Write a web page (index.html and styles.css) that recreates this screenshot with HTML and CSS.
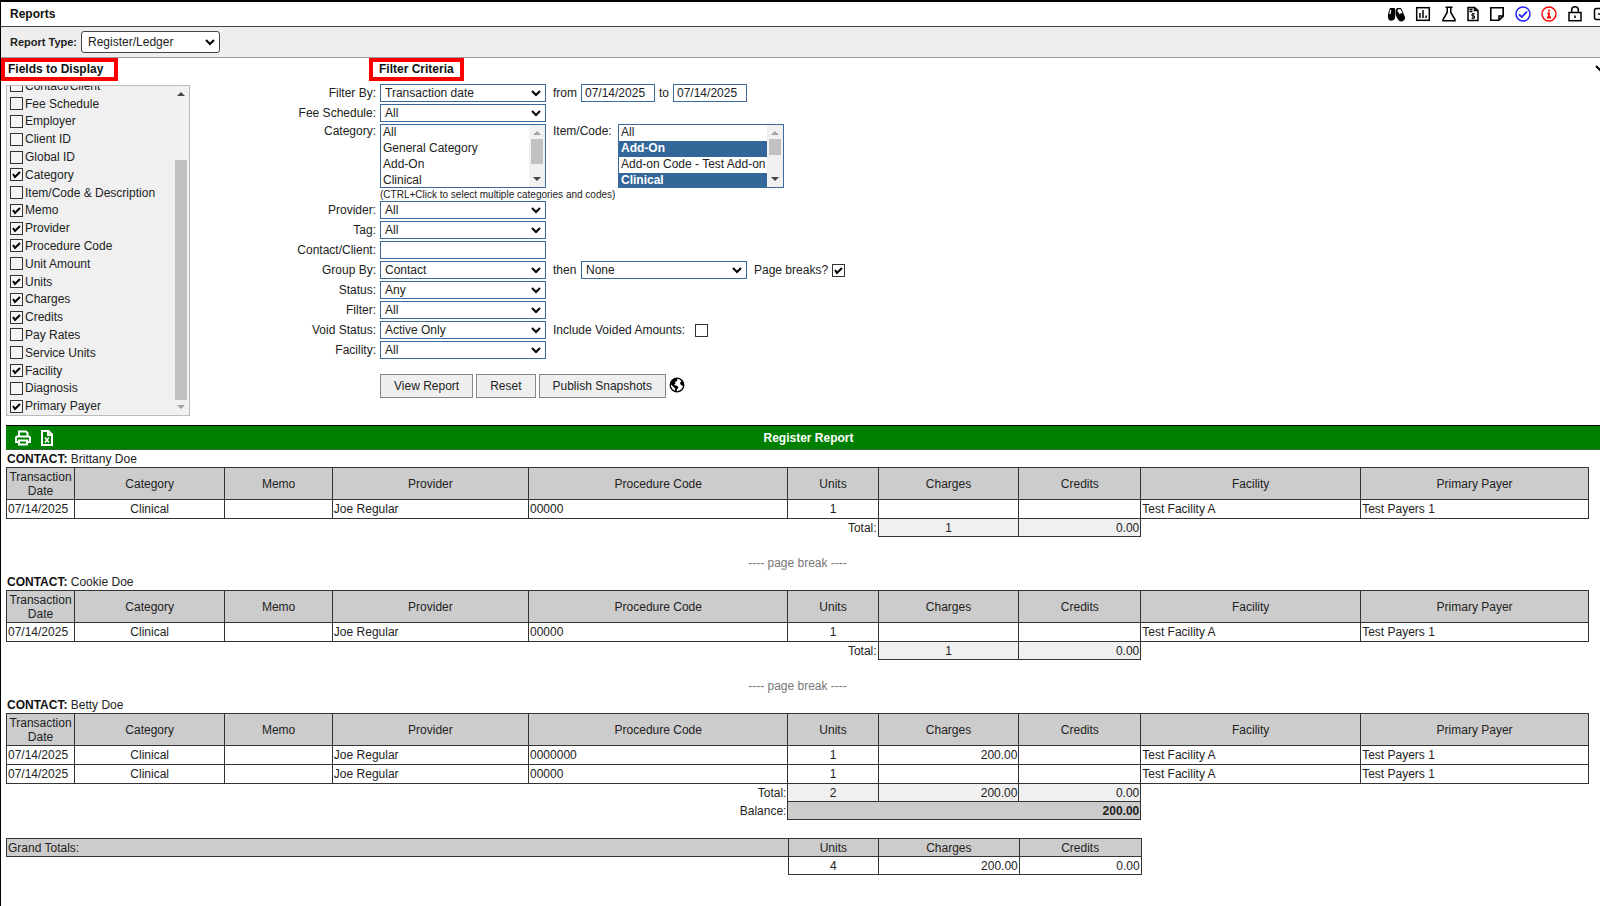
FILE: index.html
```html
<!DOCTYPE html>
<html lang="en">
<head>
  <meta charset="UTF-8" />
  <meta name="viewport" content="width=device-width, initial-scale=1.0"/>
  <title>Reports</title>
  <link rel="stylesheet" href="styles.css">
</head>
<body>
  <header class="topbar">
    <h1>Reports</h1>
    <nav class="tools">
      <button type="button" class="wide" aria-label="Search"><svg width="18" height="16" viewBox="0 0 18 16"><path d="M3 2h4q1 0 1 1v7a3.500 3.800 0 0 1-7 1.500Q.5 8 3 2z"/><path d="M10 2h4l3.500 8a3.600 3.600 0 0 1-6.500 3.500L8.500 9V4z"/><path d="M10.500 3l3-.3 2.500 4-3.500 1.800-2.500-3.500z" fill="#fff" stroke="#000" stroke-width=".8"/><path d="M3.800 4L2.800 8" stroke="#fff" stroke-width="1.200"/></svg></button>
      <button type="button" aria-label="Chart"><svg width="16" height="16" viewBox="0 0 16 16" fill="none" stroke="#000" stroke-width="1.500"><rect x="1.700" y="1.700" width="12.600" height="12.600"/><path d="M5 7v5M8 4v8M11 9.500V12"/></svg></button>
      <button type="button" aria-label="Lab"><svg width="16" height="16" viewBox="0 0 16 16" fill="none" stroke="#000" stroke-width="1.500"><path d="M4.500 1.300h7M6.200 1.500v5L2 13.500v1.200h12v-1.200L9.800 6.500v-5"/></svg></button>
      <button type="button" class="narrow" aria-label="Invoice"><svg width="12" height="16" viewBox="0 0 12 16" fill="none" stroke="#000" stroke-width="1.500"><path d="M1 1.500h6.500L11 4.500v10H1zM7.500 1.500v3H11M2.500 3.500h3M2.500 5.500h3"/><path d="M8 7.800H5v2.200h2.500v2.200h-3M6 7v6.300" stroke-width="1"/></svg></button>
      <button type="button" aria-label="Note"><svg width="16" height="16" viewBox="0 0 16 16" fill="none" stroke="#000" stroke-width="1.600"><path d="M1.800 1.800h12.400v8.400L10 14.200H1.800zM14.200 10H10v4.200"/></svg></button>
      <button type="button" aria-label="Approve"><svg width="16" height="16" viewBox="0 0 16 16" fill="none" stroke="#22f" stroke-width="1.500"><circle cx="8" cy="8" r="7"/><path d="M4 8.300l2.800 2.700 5.200-5.500" stroke-width="1.800"/></svg></button>
      <button type="button" aria-label="Information"><svg width="16" height="16" viewBox="0 0 16 16" fill="none" stroke="red" stroke-width="1.400"><circle cx="8" cy="8" r="7"/><path d="M8 3.500v2M6.300 7.300H8v4M6 11.500h4" stroke-width="1.800"/></svg></button>
      <button type="button" aria-label="Lock"><svg width="16" height="16" viewBox="0 0 16 16" fill="none" stroke="#000" stroke-width="1.500"><rect x="2" y="6.500" width="12" height="8.200"/><path d="M4.700 6.500V4a3.300 3.300 0 0 1 6.600 0v2.500M8 9.500v2.500"/></svg></button>
      <button type="button" aria-label="Log out"><svg width="16" height="16" viewBox="0 0 16 16" fill="none" stroke="#000" stroke-width="1.500"><path d="M14 5V2.500H3.500Q1.500 2.500 1.500 4.500v7Q1.500 13.500 3.500 13.500H14V11M5 8h9"/></svg></button>
    </nav>
  </header>

  <div class="report-type">
    <label for="reportType">Report Type:</label>
    <select id="reportType"><option>Register/Ledger</option></select>
  </div>

  <main>
    <form class="criteria">
      <section class="fields">
        <h2 class="marked">Fields to Display</h2>
        <div class="field-box">
          <div class="field-list">
            <label><input type="checkbox"> Contact/Client</label>
            <label><input type="checkbox"> Fee Schedule</label>
            <label><input type="checkbox"> Employer</label>
            <label><input type="checkbox"> Client ID</label>
            <label><input type="checkbox"> Global ID</label>
            <label><input type="checkbox" checked> Category</label>
            <label><input type="checkbox"> Item/Code &amp; Description</label>
            <label><input type="checkbox" checked> Memo</label>
            <label><input type="checkbox" checked> Provider</label>
            <label><input type="checkbox" checked> Procedure Code</label>
            <label><input type="checkbox"> Unit Amount</label>
            <label><input type="checkbox" checked> Units</label>
            <label><input type="checkbox" checked> Charges</label>
            <label><input type="checkbox" checked> Credits</label>
            <label><input type="checkbox"> Pay Rates</label>
            <label><input type="checkbox"> Service Units</label>
            <label><input type="checkbox" checked> Facility</label>
            <label><input type="checkbox"> Diagnosis</label>
            <label><input type="checkbox" checked> Primary Payer</label>
          </div>
          <div class="scroll scroll-end"><i class="up"></i><b></b><i class="down off"></i></div>
        </div>
      </section>

      <section class="filters">
        <h2 class="marked">Filter Criteria</h2>
        <div class="row">
          <label class="name" for="filterBy">Filter By:</label>
          <select id="filterBy"><option>Transaction date</option></select>
          <label class="side" for="dateFrom">from</label>
          <input type="text" class="date" id="dateFrom" value="07/14/2025">
          <label for="dateTo">to</label>
          <input type="text" class="date" id="dateTo" value="07/14/2025">
        </div>
        <div class="row">
          <label class="name" for="feeSchedule">Fee Schedule:</label>
          <select id="feeSchedule"><option>All</option></select>
        </div>
        <div class="row top">
          <label class="name" for="category">Category:</label>
          <div class="listbox">
            <select id="category" multiple size="4">
              <option>All</option>
              <option>General Category</option>
              <option>Add-On</option>
              <option>Clinical</option>
            </select>
            <div class="scroll"><i class="up off"></i><b class="large"></b><i class="down"></i></div>
          </div>
          <label class="side item" for="itemCode">Item/Code:</label>
          <div class="listbox">
            <select id="itemCode" multiple size="4">
              <option>All</option>
              <option class="group" selected>Add-On</option>
              <option>Add-on Code - Test Add-on</option>
              <option class="group" selected>Clinical</option>
            </select>
            <div class="scroll"><i class="up off"></i><b></b><i class="down"></i></div>
          </div>
        </div>
        <p class="hint">(CTRL+Click to select multiple categories and codes)</p>
        <div class="row">
          <label class="name" for="provider">Provider:</label>
          <select id="provider"><option>All</option></select>
        </div>
        <div class="row">
          <label class="name" for="tag">Tag:</label>
          <select id="tag"><option>All</option></select>
        </div>
        <div class="row">
          <label class="name" for="contact">Contact/Client:</label>
          <input type="text" id="contact">
        </div>
        <div class="row">
          <label class="name" for="groupBy">Group By:</label>
          <select id="groupBy"><option>Contact</option></select>
          <label class="side" for="thenBy">then</label>
          <select id="thenBy"><option>None</option></select>
          <label class="check" for="pageBreaks">Page breaks?</label>
          <input type="checkbox" id="pageBreaks" checked>
        </div>
        <div class="row">
          <label class="name" for="status">Status:</label>
          <select id="status"><option>Any</option></select>
        </div>
        <div class="row">
          <label class="name" for="filter">Filter:</label>
          <select id="filter"><option>All</option></select>
        </div>
        <div class="row">
          <label class="name" for="voidStatus">Void Status:</label>
          <select id="voidStatus"><option>Active Only</option></select>
          <label class="side voided" for="voided">Include Voided Amounts:</label>
          <input type="checkbox" id="voided">
        </div>
        <div class="row">
          <label class="name" for="facility">Facility:</label>
          <select id="facility"><option>All</option></select>
        </div>
        <div class="buttons">
          <button type="submit">View Report</button>
          <button type="reset">Reset</button>
          <button type="button">Publish Snapshots</button>
          <svg width="16" height="16" viewBox="0 0 16 16"><circle cx="8" cy="8" r="6.800" fill="#fff" stroke="#000" stroke-width="1.300"/><path d="M1.500 7L3 3.500 6 1.500l2.500.3L8 4 6 5l.5 1.500L5 8l3 .8 1.500 1.700L8 12.500 7.500 15 6 14.500v-3L4 9.500z"/><path d="M10.500 2l3 2 1.500 4-1.500 1-2-1.500-.5-2 1.500-1z"/></svg>
        </div>
      </section>

      <button type="button" class="collapse" aria-label="Collapse"><svg width="12" height="12" viewBox="0 0 12 12" fill="none" stroke="#000" stroke-width="2"><path d="M1 3l5 5 5-5"/></svg></button>
    </form>

    <div class="report-bar">
      <div class="exports">
        <button type="button" aria-label="Print"><svg width="16" height="16" viewBox="0 0 16 16" fill="none" stroke="#fff" stroke-width="2"><path d="M4 6V1.500h7L12.500 3v3M4 12H1V8q0-1.500 1.500-1.500h11Q15 6.500 15 8v4h-3M4 10.500h8v4H4z"/></svg></button>
        <button type="button" aria-label="Export to Excel"><svg width="12" height="16" viewBox="0 0 12 16" fill="none" stroke="#fff" stroke-width="2"><path d="M1 1h6.500L11 4.500V15H1zM7 1v4h4"/><path d="M4 7.500l4 5M8 7.500l-4 5" stroke-width="1.600"/></svg></button>
      </div>
      <h2>Register Report</h2>
    </div>

    <div class="report">
      <p class="contact"><b>CONTACT:</b> Brittany Doe</p>
      <table>
        <colgroup><col class="c-date"><col class="c-cat"><col class="c-memo"><col class="c-prov"><col class="c-code"><col class="c-units"><col class="c-charges"><col class="c-credits"><col class="c-fac"><col class="c-payer"></colgroup>
        <thead>
          <tr><th>Transaction Date</th><th>Category</th><th>Memo</th><th>Provider</th><th>Procedure Code</th><th>Units</th><th>Charges</th><th>Credits</th><th>Facility</th><th>Primary Payer</th></tr>
        </thead>
        <tbody>
          <tr><td>07/14/2025</td><td class="mid">Clinical</td><td></td><td>Joe Regular</td><td>00000</td><td class="mid">1</td><td></td><td></td><td>Test Facility A</td><td>Test Payers 1</td></tr>
        </tbody>
        <tfoot>
          <tr><td class="cap" colspan="6">Total:</td><td class="sum mid">1</td><td class="sum num">0.00</td></tr>
        </tfoot>
      </table>
      <p class="break">---- page break ----</p>

      <p class="contact"><b>CONTACT:</b> Cookie Doe</p>
      <table>
        <colgroup><col class="c-date"><col class="c-cat"><col class="c-memo"><col class="c-prov"><col class="c-code"><col class="c-units"><col class="c-charges"><col class="c-credits"><col class="c-fac"><col class="c-payer"></colgroup>
        <thead>
          <tr><th>Transaction Date</th><th>Category</th><th>Memo</th><th>Provider</th><th>Procedure Code</th><th>Units</th><th>Charges</th><th>Credits</th><th>Facility</th><th>Primary Payer</th></tr>
        </thead>
        <tbody>
          <tr><td>07/14/2025</td><td class="mid">Clinical</td><td></td><td>Joe Regular</td><td>00000</td><td class="mid">1</td><td></td><td></td><td>Test Facility A</td><td>Test Payers 1</td></tr>
        </tbody>
        <tfoot>
          <tr><td class="cap" colspan="6">Total:</td><td class="sum mid">1</td><td class="sum num">0.00</td></tr>
        </tfoot>
      </table>
      <p class="break">---- page break ----</p>

      <p class="contact"><b>CONTACT:</b> Betty Doe</p>
      <table>
        <colgroup><col class="c-date"><col class="c-cat"><col class="c-memo"><col class="c-prov"><col class="c-code"><col class="c-units"><col class="c-charges"><col class="c-credits"><col class="c-fac"><col class="c-payer"></colgroup>
        <thead>
          <tr><th>Transaction Date</th><th>Category</th><th>Memo</th><th>Provider</th><th>Procedure Code</th><th>Units</th><th>Charges</th><th>Credits</th><th>Facility</th><th>Primary Payer</th></tr>
        </thead>
        <tbody>
          <tr><td>07/14/2025</td><td class="mid">Clinical</td><td></td><td>Joe Regular</td><td>0000000</td><td class="mid">1</td><td class="num">200.00</td><td></td><td>Test Facility A</td><td>Test Payers 1</td></tr>
          <tr><td>07/14/2025</td><td class="mid">Clinical</td><td></td><td>Joe Regular</td><td>00000</td><td class="mid">1</td><td></td><td></td><td>Test Facility A</td><td>Test Payers 1</td></tr>
        </tbody>
        <tfoot>
          <tr><td class="cap" colspan="5">Total:</td><td class="sum mid">2</td><td class="sum num">200.00</td><td class="sum num">0.00</td></tr>
          <tr><td class="cap" colspan="5">Balance:</td><td class="balance num" colspan="3">200.00</td></tr>
        </tfoot>
      </table>

      <table class="grand">
        <colgroup><col class="c-date"><col class="c-cat"><col class="c-memo"><col class="c-prov"><col class="c-code"><col class="c-units"><col class="c-charges"><col class="c-credits"><col class="c-fac"><col class="c-payer"></colgroup>
        <tbody>
          <tr><th class="left" colspan="5">Grand Totals:</th><th>Units</th><th>Charges</th><th>Credits</th></tr>
          <tr><td class="cap" colspan="5"></td><td class="mid">4</td><td class="num">200.00</td><td class="num">0.00</td></tr>
        </tbody>
      </table>
    </div>
  </main>
</body>
</html>
```
FILE: styles.css
```css
* {
  box-sizing: border-box;
}

body {
  font-family: "Liberation Sans", Arial, sans-serif;
  font-size: 12px;
  line-height: 14px;
  margin: 0;
  min-height: 100vh;
  color: #222;
  background: #fff;
  border-top: 2px solid #000;
  border-left: 1px solid #000;
  overflow-x: hidden;
}

h1, h2, p {
  margin: 0;
  font-size: 12px;
}

h1, h2 {
  color: #111;
}

input, select, button {
  margin: 0;
  font-family: inherit;
  font-size: 12px;
  color: #222;
}

/* top bar */
.topbar {
  display: flex;
  align-items: center;
  justify-content: space-between;
  height: 25px;
  padding-left: 9px;
  border-bottom: 1px solid #444;
  overflow: hidden;
}

.tools {
  display: flex;
  gap: 10px;
  margin-right: -9px;
}

.tools button, .exports button, .collapse {
  display: block;
  width: 16px;
  height: 16px;
  padding: 0;
  border: none;
  background: none;
  cursor: pointer;
}

.tools .wide {
  width: 18px;
}

.tools .narrow, .exports button + button {
  width: 12px;
}

svg {
  display: block;
}

.report-type {
  display: flex;
  align-items: center;
  gap: 4px;
  height: 31px;
  padding-left: 9px;
  background: #eee;
  border-bottom: 1px solid #999;
}

.report-type label {
  font-size: 11px;
  font-weight: bold;
}

/* form controls */
select, input[type="text"] {
  width: 166px;
  height: 18px;
  padding: 0 4px;
  border: 1px solid #3c6a9c;
  border-radius: 0;
  background: #fff;
  outline: none;
}

select {
  appearance: none;
  background: #fff url("data:image/svg+xml,%3Csvg xmlns='http://www.w3.org/2000/svg' width='10' height='7' fill='none' stroke='black' stroke-width='2'%3E%3Cpath d='M1 1l4 4 4-4'/%3E%3C/svg%3E") no-repeat right 4px center;
}

.report-type select {
  width: 139px;
  height: 22px;
  padding: 0 6px;
  border-color: #444;
  border-radius: 3px;
}

input[type="checkbox"] {
  appearance: none;
  flex: none;
  width: 13px;
  height: 13px;
  border: 1px solid #333;
  background: #fff;
}

input[type="checkbox"]:checked {
  background: #fff url("data:image/svg+xml,%3Csvg xmlns='http://www.w3.org/2000/svg' width='9' height='9' fill='none' stroke='black' stroke-width='2'%3E%3Cpath d='M1 4l2 3 5-5'/%3E%3C/svg%3E") no-repeat center;
}

.criteria {
  display: flex;
  align-items: flex-start;
  overflow: hidden;
}

/* highlighted headings */
.marked {
  width: max-content;
  height: 23px;
  border: 4px solid #f00;
}

.fields {
  flex: none;
  width: 189px;
}

.fields .marked {
  padding: 0 11px 0 3px;
}

.field-box {
  display: flex;
  width: 184px;
  height: 331px;
  margin: 4px 0 0 5px;
  border: 1px solid #bbb;
  background: #f0f0f0;
  overflow: hidden;
}

.field-list {
  flex: 1;
  display: grid;
  grid-auto-rows: 1fr;
  align-self: flex-end;
  height: 338px;
  padding-left: 3px;
}

.field-list label {
  display: flex;
  align-items: center;
  gap: 2px;
}

.field-list input[type="checkbox"] {
  background-color: #f6f6f6;
}

/* scroll strips */
.scroll {
  flex: none;
  display: flex;
  flex-direction: column;
  align-items: center;
  width: 16px;
  padding: 6px 0;
  background: #f1f1f1;
}

.scroll b {
  width: 12px;
  height: 16px;
  margin: 4px 0 auto;
  background: #c1c1c1;
}

.scroll .large {
  height: 25px;
}

.scroll i {
  border: 4px solid transparent;
}

.scroll .up {
  border-top: 0;
  border-bottom-color: #444;
}

.scroll .down {
  border-bottom: 0;
  border-top-color: #444;
}

.scroll .up.off {
  border-bottom-color: #a3a3a3;
}

.scroll .down.off {
  border-top-color: #a3a3a3;
}

.scroll-end b {
  height: 240px;
  margin: auto 0 5px;
}

/* filters */
.filters {
  flex: 1;
  margin-left: 90px;
}

.filters .marked {
  margin: 0 0 3px 89px;
  padding: 0 6px;
}

.row {
  display: flex;
  align-items: center;
  gap: 4px;
  margin-bottom: 2px;
}

.row .name {
  width: 96px;
  text-align: right;
}

.row.top {
  align-items: flex-start;
  margin-bottom: 0;
}

.side {
  margin-left: 3px;
  min-width: 24px;
}

.side.item {
  width: 61px;
}

.row .date {
  width: 74px;
  padding: 0 3px;
}

.row .check {
  margin-left: 3px;
}

.voided {
  margin-right: 6px;
}

.listbox {
  display: flex;
  width: 166px;
  height: 64px;
  border: 1px solid #3c6a9c;
  overflow: hidden;
}

.listbox select {
  flex: 1;
  min-width: 0;
  width: auto;
  height: 64px;
  padding: 0;
  border: none;
  background: #fff;
  overflow: hidden;
}

.listbox option {
  height: 16px;
  padding: 0 2px;
  line-height: 15px;
}

.listbox option:checked {
  color: #fff;
  background: #369 linear-gradient(#369, #369);
}

.listbox .group {
  font-weight: bold;
}

.hint {
  margin-left: 100px;
  font-size: 10px;
  line-height: 13px;
}

.buttons {
  display: flex;
  gap: 3px;
  margin: 15px 0 0 100px;
}

.buttons button {
  height: 24px;
  padding: 0 13px;
  border: 1px solid #888;
  background: #efefef;
  cursor: pointer;
}

.buttons svg {
  margin-top: 3px;
}

.collapse {
  flex: none;
  width: 12px;
  margin: 3px -7px 0 0;
}

/* report */
.report-bar {
  display: grid;
  grid-template-columns: 60px 1fr 49px;
  align-items: center;
  height: 25px;
  margin: 9px 0 0 5px;
  background: green;
  border-top: 1px solid #000;
  border-bottom: 1px solid #363;
}

.report-bar h2 {
  color: #fff;
  text-align: center;
}

.exports {
  display: flex;
  gap: 10px;
  padding-left: 9px;
}

.report {
  margin: 0 11px 0 5px;
}

.contact {
  padding: 2px 1px;
  height: 17px;
}

.contact b {
  color: #111;
}

table {
  width: 100%;
  table-layout: fixed;
  border-collapse: collapse;
}

.c-date { width: 4.3%; }
.c-cat { width: 9.5%; }
.c-memo { width: 6.8%; }
.c-prov { width: 12.4%; }
.c-code { width: 16.4%; }
.c-units { width: 5.7%; }
.c-charges { width: 8.9%; }
.c-credits { width: 7.7%; }
.c-fac { width: 13.9%; }
.c-payer { width: 14.4%; }

th, td {
  height: 19px;
  padding: 1px;
  border: 1px solid #333;
  text-align: left;
}

th {
  padding: 1px 0;
  background: #ccc;
  font-weight: normal;
  text-align: center;
}

thead th {
  height: 32px;
}

tfoot td, .grand th, .grand td {
  height: 18px;
}

.mid {
  text-align: center;
}

.num, .cap {
  text-align: right;
}

.left {
  padding-left: 1px;
  text-align: left;
}

.cap {
  border: none;
}

.sum {
  background: #f0f0f0;
}

.balance {
  background: #ccc;
  font-weight: bold;
}

.break {
  padding: 19px 0 3px;
  color: #777;
  text-align: center;
}

.grand {
  margin-top: 18px;
}
```
